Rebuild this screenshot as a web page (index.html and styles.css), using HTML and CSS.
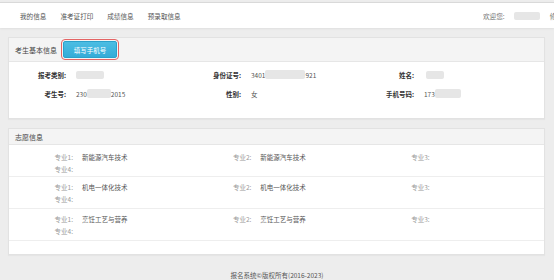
FILE: index.html
```html
<!DOCTYPE html>
<html lang="zh-CN">
<head>
<meta charset="utf-8">
<title>报名系统</title>
<link rel="stylesheet" href="styles.css">
</head>
<body>
<header class="nav">
  <ul class="menu">
    <li>我的信息</li>
    <li>准考证打印</li>
    <li>成绩信息</li>
    <li>预录取信息</li>
  </ul>
  <div class="user">欢迎您: <span class="blur b-user"></span><span class="pwd">修改密码</span></div>
</header>

<main class="wrap">
  <section class="panel">
    <div class="panel-head tall">
      <span class="title">考生基本信息</span>
      <button class="btn">填写手机号</button>
    </div>
    <div class="info">
      <div class="lbl">报考类别:</div>
      <div class="val"><span class="blur b-type"></span></div>
      <div class="lbl">身份证号:</div>
      <div class="val">3401<span class="blur b-id"></span>921</div>
      <div class="lbl">姓名:</div>
      <div class="val"><span class="blur b-name"></span></div>
      <div class="lbl">考生号:</div>
      <div class="val">230<span class="blur b-no"></span>2015</div>
      <div class="lbl">性别:</div>
      <div class="val">女</div>
      <div class="lbl">手机号码:</div>
      <div class="val">173<span class="blur b-tel"></span></div>
    </div>
  </section>

  <section class="panel">
    <div class="panel-head">
      <span class="title">志愿信息</span>
    </div>
    <div class="wish">
      <div class="cell"><span class="k">专业1:</span><span class="v">新能源汽车技术</span></div>
      <div class="cell"><span class="k">专业2:</span><span class="v">新能源汽车技术</span></div>
      <div class="cell"><span class="k">专业3:</span><span class="v"></span></div>
      <div class="cell"><span class="k">专业4:</span><span class="v"></span></div>
    </div>
    <div class="wish">
      <div class="cell"><span class="k">专业1:</span><span class="v">机电一体化技术</span></div>
      <div class="cell"><span class="k">专业2:</span><span class="v">机电一体化技术</span></div>
      <div class="cell"><span class="k">专业3:</span><span class="v"></span></div>
      <div class="cell"><span class="k">专业4:</span><span class="v"></span></div>
    </div>
    <div class="wish">
      <div class="cell"><span class="k">专业1:</span><span class="v">烹饪工艺与营养</span></div>
      <div class="cell"><span class="k">专业2:</span><span class="v">烹饪工艺与营养</span></div>
      <div class="cell"><span class="k">专业3:</span><span class="v"></span></div>
      <div class="cell"><span class="k">专业4:</span><span class="v"></span></div>
    </div>
    <div class="wish-end"></div>
  </section>
</main>

<footer class="foot">报名系统©版权所有(2016-2023)</footer>
</body>
</html>
```

FILE: styles.css
```css
* { box-sizing: border-box; }

html, body {
  margin: 0;
  padding: 0;
}

body {
  background: #ededed;
  font-family: "Noto Sans CJK SC", "Noto Sans", sans-serif;
  font-size: 6.6px;
  color: #555;
  padding-top: 2px;
  width: 554px;
  height: 280px;
  overflow: hidden;
}

.nav {
  display: flex;
  align-items: center;
  height: 26px;
  background: #fff;
  border-top: 1px solid #d9d9d9;
  box-shadow: 0 1px 2px rgba(0,0,0,0.06);
  padding-left: 20px;
  overflow: hidden;
}

.menu {
  display: flex;
  gap: 14px;
  list-style: none;
  margin: 0;
  padding: 0;
  color: #555;
}

.user {
  margin-left: auto;
  width: 71px;
  flex-shrink: 0;
  white-space: nowrap;
  overflow: hidden;
  color: #777;
  display: flex;
  align-items: center;
}

.pwd { margin-left: 10px; flex-shrink: 0; }

.blur {
  display: inline-block;
  flex-shrink: 0;
  background: #e6e6e6;
  border-radius: 2px;
  vertical-align: middle;
  filter: blur(0.5px);
}

.b-user { width: 26px; height: 8px; margin-left: 9px; }
.b-type { width: 28px; height: 8px; }
.b-id { width: 40px; height: 9px; }
.b-name { width: 18px; height: 8px; margin-left: 2px; }
.b-no { width: 24px; height: 9px; }
.b-tel { width: 26px; height: 9px; }

.wrap {
  padding: 9px 9px 0 8px;
  display: flex;
  flex-direction: column;
  gap: 9px;
}

.panel {
  background: #fff;
  border: 1px solid #e2e2e2;
  box-shadow: 0 1px 1px rgba(0,0,0,0.03);
}

.panel-head {
  display: flex;
  align-items: center;
  height: 16px;
  padding-left: 6px;
  background: #f4f4f4;
  border-bottom: 1px solid #e6e6e6;
  color: #444;
}

.panel-head.tall { height: 24px; }

.title { font-size: 7px; }

.btn {
  margin-left: 6px;
  width: 54px;
  height: 17px;
  padding: 0;
  border: 1px solid #2aa1cb;
  border-radius: 2px;
  background: linear-gradient(#4cbde3, #35acd8);
  color: #fff;
  font-family: inherit;
  font-size: 6.5px;
  outline: 1px solid #e46464;
  outline-offset: 1px;
}

.info {
  display: grid;
  grid-template-columns: 57px 98px 57px 96px 57px 1fr;
  column-gap: 10px;
  grid-auto-rows: 19px;
  align-items: center;
  padding: 3px 0 15px;
  font-size: 6.5px;
}

.lbl {
  text-align: right;
  color: #333;
  font-weight: bold;
}

.val {
  color: #555;
  display: flex;
  align-items: center;
  white-space: nowrap;
}

.wish {
  display: grid;
  grid-template-columns: repeat(3, 1fr);
  grid-auto-rows: 12px;
  align-items: center;
  padding: 6px 0 1px;
  border-bottom: 1px solid #eeeeee;
  font-size: 6.5px;
}

.wish + .wish { padding-top: 4px; padding-bottom: 3px; }

.cell {
  display: flex;
  white-space: nowrap;
}

.k {
  width: 64px;
  text-align: right;
  color: #999;
}

.v {
  margin-left: 9px;
  color: #555;
}

.wish-end { height: 13px; }

.foot {
  margin-top: 14px;
  text-align: center;
  font-size: 6.5px;
  line-height: 12px;
  color: #555;
}
```
